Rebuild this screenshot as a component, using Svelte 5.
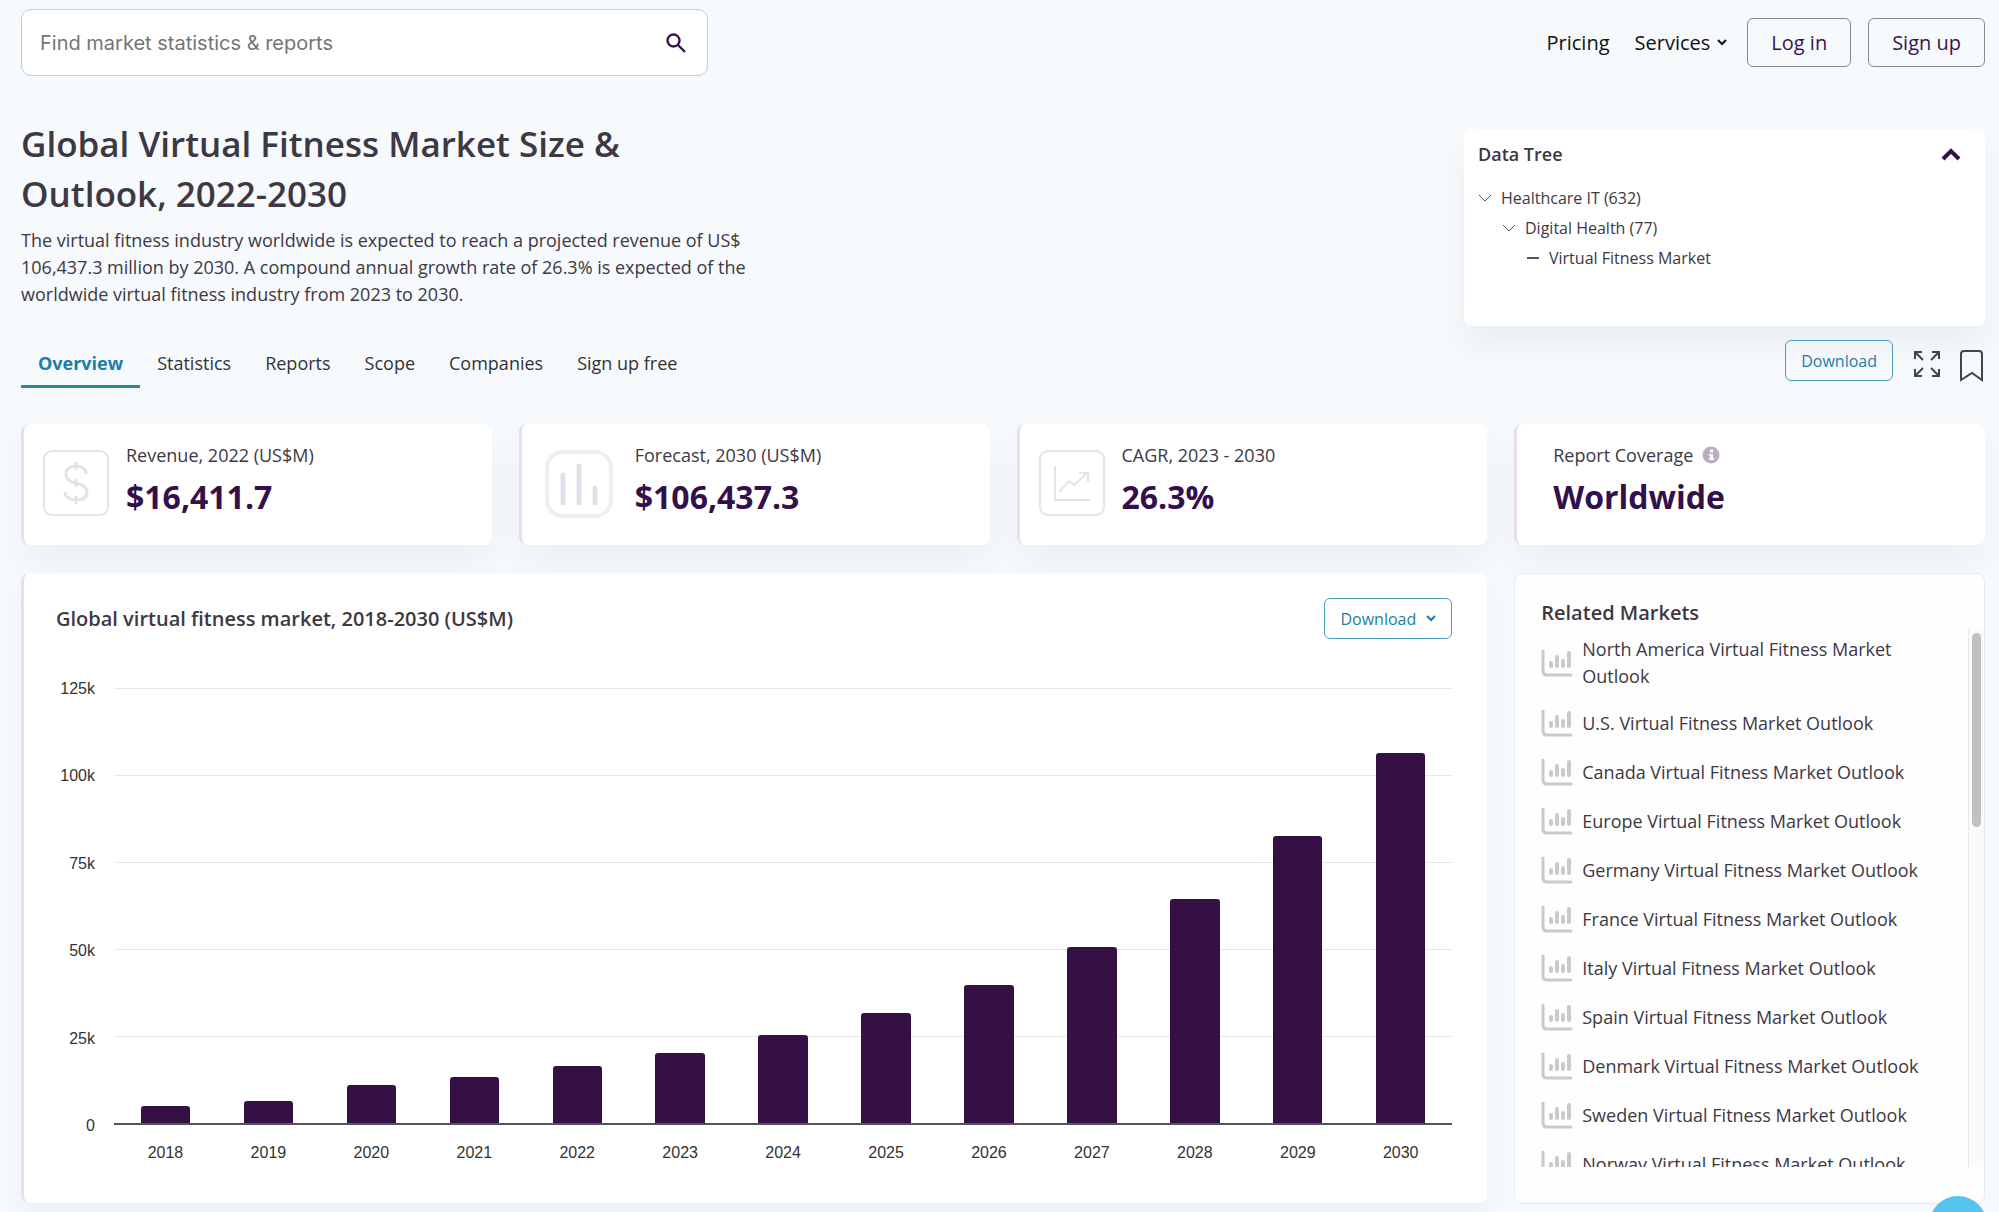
<script lang="ts">
	interface Row {
		year: number;
		value: number;
	}

	const MAX = 125000;

	const tabs = ['Overview', 'Statistics', 'Reports', 'Scope', 'Companies', 'Sign up free'];
	let active = 'Overview';

	const ticks = ['125k', '100k', '75k', '50k', '25k', '0'];

	const rows: Row[] = [
		{ year: 2018, value: 4900 },
		{ year: 2019, value: 6300 },
		{ year: 2020, value: 11000 },
		{ year: 2021, value: 13300 },
		{ year: 2022, value: 16411.7 },
		{ year: 2023, value: 20100 },
		{ year: 2024, value: 25200 },
		{ year: 2025, value: 31700 },
		{ year: 2026, value: 39700 },
		{ year: 2027, value: 50600 },
		{ year: 2028, value: 64300 },
		{ year: 2029, value: 82400 },
		{ year: 2030, value: 106437.3 }
	];

	const regions = [
		'North America',
		'U.S.',
		'Canada',
		'Europe',
		'Germany',
		'France',
		'Italy',
		'Spain',
		'Denmark',
		'Sweden',
		'Norway'
	];
</script>

<div class="page">
	<header>
		<form class="search" on:submit|preventDefault>
			<input type="search" aria-label="Search" placeholder="Find market statistics & reports" />
			<button type="submit" aria-label="Search">
				<svg width="22" height="22" viewBox="0 0 22 22" fill="none" stroke="#3a1150" stroke-width="2.4">
					<circle cx="8.5" cy="8.5" r="6" />
					<path d="M13 13l7 7" />
				</svg>
			</button>
		</form>
		<nav class="top">
			<a href="#pricing">Pricing</a>
			<a href="#services">
				Services
				<svg width="10" height="7" viewBox="0 0 10 7" fill="none" stroke="#111" stroke-width="2">
					<path d="M1 1l4 4 4-4" />
				</svg>
			</a>
			<button class="account">Log in</button>
			<button class="account">Sign up</button>
		</nav>
	</header>

	<section class="intro">
		<div class="lead">
			<h1>Global Virtual Fitness Market Size &amp; Outlook, 2022-2030</h1>
			<p>
				The virtual fitness industry worldwide is expected to reach a projected revenue of US$
				106,437.3 million by 2030. A compound annual growth rate of 26.3% is expected of the
				worldwide virtual fitness industry from 2023 to 2030.
			</p>
		</div>
		<aside class="tree">
			<div class="tree-head">
				<h2>Data Tree</h2>
				<button aria-label="Collapse data tree">
					<svg width="20" height="13" viewBox="0 0 20 13" fill="none" stroke="#33104a" stroke-width="4">
						<path d="M2 11l8-8 8 8" />
					</svg>
				</button>
			</div>
			<ul>
				<li>
					<svg width="14" height="8" viewBox="0 0 14 8"><path d="M1 1l6 6 6-6" /></svg>
					<a href="#healthcare">Healthcare IT (632)</a>
				</li>
				<li class="second">
					<svg width="14" height="8" viewBox="0 0 14 8"><path d="M1 1l6 6 6-6" /></svg>
					<a href="#digital">Digital Health (77)</a>
				</li>
				<li class="third">
					<svg width="14" height="8" viewBox="0 0 14 8"><path stroke-width="2" d="M1 4h12" /></svg>
					<a href="#fitness">Virtual Fitness Market</a>
				</li>
			</ul>
		</aside>
	</section>

	<div class="bar">
		<nav class="tabs">
			{#each tabs as tab}
				<button class:active={tab === active} on:click={() => (active = tab)}>{tab}</button>
			{/each}
		</nav>
		<div class="tools">
			<button class="download">Download</button>
			<button class="icon" aria-label="Full screen">
				<svg width="28" height="28" viewBox="0 0 28 28" fill="none" stroke="#444" stroke-width="2">
					<path d="M10 10L2 2M2 9V2h7M18 10l8-8M19 2h7v7M10 18l-8 8M2 19v7h7M18 18l8 8M26 19v7h-7" />
				</svg>
			</button>
			<button class="icon" aria-label="Bookmark">
				<svg width="26" height="32" viewBox="0 0 26 32" fill="none" stroke="#444" stroke-width="2">
					<path d="M2 30V4q0-3 3-3h15q3 0 3 3v26l-10-7z" />
				</svg>
			</button>
		</div>
	</div>

	<section class="stats">
		<article class="card">
			<svg class="badge" width="66" height="66" viewBox="0 0 66 66" fill="none" stroke="#e6e2ea" stroke-width="2">
				<rect x="1" y="1" width="64" height="64" rx="8" />
				<path
					stroke-width="3"
					d="M43 24c0-5-4-8-10-8s-10 3-10 8 4 8 10 9 11 3 11 9-5 8-11 8-11-3-11-8M33 12v8M33 29v8M33 46v8"
				/>
			</svg>
			<div>
				<h3>Revenue, 2022 (US$M)</h3>
				<strong>$16,411.7</strong>
			</div>
		</article>
		<article class="card forecast">
			<svg class="badge" width="68" height="68" viewBox="0 0 68 68" fill="none" stroke="#f0eef3" stroke-width="4">
				<rect x="2" y="2" width="64" height="64" rx="16" />
				<path stroke="#e3dfe9" stroke-width="5" stroke-linecap="round" d="M18 25v28M34 16v37M50 38v15" />
			</svg>
			<div>
				<h3>Forecast, 2030 (US$M)</h3>
				<strong>$106,437.3</strong>
			</div>
		</article>
		<article class="card">
			<svg class="badge" width="66" height="66" viewBox="0 0 66 66" fill="none" stroke="#e6e2ea" stroke-width="2">
				<rect x="1" y="1" width="64" height="64" rx="8" />
				<path d="M16 16v34h35M20 42l10-11 5 4 13-12M40 23h9v9" />
			</svg>
			<div>
				<h3>CAGR, 2023 - 2030</h3>
				<strong>26.3%</strong>
			</div>
		</article>
		<article class="card plain">
			<div>
				<h3>
					Report Coverage
					<svg width="18" height="18" viewBox="0 0 18 18">
						<circle cx="9" cy="9" r="8.5" fill="#b9aec3" />
						<path d="M8 3.5h3v3H8zM7 8h4v4h1v2H7v-2h1v-2H7z" fill="#fff" />
					</svg>
				</h3>
				<strong>Worldwide</strong>
			</div>
		</article>
	</section>

	<section class="panels">
		<article class="chart-card">
			<div class="chart-head">
				<h2>Global virtual fitness market, 2018-2030 (US$M)</h2>
				<button class="download">
					Download
					<svg width="10" height="7" viewBox="0 0 10 7" fill="none" stroke="#1b7ea6" stroke-width="2">
						<path d="M1 1l4 4 4-4" />
					</svg>
				</button>
			</div>
			<div class="chart">
				<div class="axis">
					{#each ticks as tick}
						<span>{tick}</span>
					{/each}
				</div>
				<div class="plot">
					{#each rows as row}
						<div class="col">
							<div class="bar-fill" style={`height: ${(row.value / MAX) * 100}%`}></div>
						</div>
					{/each}
				</div>
				<div class="years">
					{#each rows as row}
						<span>{row.year}</span>
					{/each}
				</div>
			</div>
		</article>

		<aside class="related">
			<h2>Related Markets</h2>
			<div class="scroller">
				<ul>
					{#each regions as region}
						<li>
							<svg width="32" height="28" viewBox="0 0 32 28" fill="none" stroke="#cacaca" stroke-linecap="round">
								<path stroke-width="3" d="M2 2v20q0 4 4 4h24" />
								<path stroke-width="4" d="M10 14v3M16 8v9M22 12v5M28 4v13" />
							</svg>
							<a href={`#${region}`}>{region} Virtual Fitness Market Outlook</a>
						</li>
					{/each}
				</ul>
				<div class="track"><div class="thumb"></div></div>
			</div>
		</aside>
	</section>

	<button class="chat" aria-label="Open chat"></button>
</div>

<style>
	:global(body) {
		margin: 0;
		background: #f6fafd;
	}

	.page {
		box-sizing: border-box;
		padding: 9px 14px 9px 21px;
		font-family: 'Open Sans', 'Noto Sans', sans-serif;
		color: #3d3843;
		overflow: hidden;
	}

	.page :global(*) {
		box-sizing: border-box;
	}

	h1,
	h2,
	h3,
	p,
	ul {
		margin: 0;
		padding: 0;
	}

	li {
		list-style: none;
	}

	a {
		color: inherit;
		text-decoration: none;
	}

	button {
		font: inherit;
		background: none;
		border: 0;
		padding: 0;
		cursor: pointer;
	}

	svg {
		display: block;
		flex: none;
	}

	header {
		display: flex;
		justify-content: space-between;
		align-items: center;
	}

	.search {
		display: flex;
		align-items: center;
		width: 35%;
		height: 67px;
		padding: 0 20px 0 18px;
		background: #fff;
		border: 1px solid #c9cbd3;
		border-radius: 10px;
	}

	.search input {
		flex: 1;
		border: 0;
		outline: 0;
		padding: 0;
		background: none;
		font: 20px Inter, sans-serif;
	}

	.search input::placeholder {
		color: #757575;
	}

	.top {
		display: flex;
		align-items: center;
		font-size: 20px;
		color: #111;
	}

	.top a {
		display: flex;
		align-items: center;
		gap: 7px;
		margin-right: 25px;
	}

	.top a + a {
		margin-right: 20px;
	}

	.account {
		height: 49px;
		padding: 0 23px;
		border: 1px solid #8a8592;
		border-radius: 6px;
		color: #3a1150;
	}

	.account + .account {
		margin-left: 17px;
	}

	.intro {
		display: flex;
		justify-content: space-between;
		margin-top: 43px;
	}

	.lead {
		width: 730px;
	}

	h1 {
		margin-right: 60px;
		font-size: 35px;
		line-height: 50px;
		font-weight: 600;
	}

	.lead p {
		margin-top: 8px;
		font-size: 18px;
		line-height: 27px;
	}

	.tree {
		align-self: flex-start;
		width: 521px;
		height: 197px;
		margin-top: 10px;
		padding: 12px 24px 0 14px;
		background: #fff;
		border-radius: 8px;
		box-shadow: 0 20px 30px rgba(60, 60, 80, 0.06);
	}

	.tree-head {
		display: flex;
		align-items: center;
		justify-content: space-between;
	}

	.tree h2 {
		font-size: 18px;
		line-height: 27px;
		font-weight: 600;
	}

	.tree ul {
		margin-top: 15px;
	}

	.tree li {
		display: flex;
		align-items: center;
		gap: 9px;
		font-size: 16px;
		line-height: 30px;
	}

	.tree li svg {
		fill: none;
		stroke: #555;
	}

	.tree .second {
		padding-left: 24px;
	}

	.tree .third {
		padding-left: 48px;
	}

	.bar {
		display: flex;
		justify-content: space-between;
		margin-top: 14px;
	}

	.tabs {
		display: flex;
		align-items: flex-end;
	}

	.tabs button {
		height: 48px;
		padding: 0 17px;
		border-bottom: 3px solid transparent;
		font-size: 18px;
		color: #333;
	}

	.tabs .active {
		border-color: #2a85ad;
		color: #1b7ea6;
		font-weight: 700;
	}

	.tools {
		display: flex;
		align-items: flex-start;
	}

	.download {
		display: flex;
		align-items: center;
		gap: 10px;
		height: 41px;
		padding: 0 15px;
		border: 1px solid #4a9fbe;
		border-radius: 6px;
		font-size: 16px;
		color: #1b7ea6;
	}

	.icon {
		margin: 10px 0 0 20px;
	}

	.icon + .icon {
		margin-left: 18px;
	}

	.stats {
		display: grid;
		grid-template-columns: repeat(4, 1fr);
		gap: 27px;
		margin-top: 36px;
	}

	.card,
	.chart-card {
		background: #fff;
		border-left: 3px solid #e6e0ee;
		border-radius: 8px;
		box-shadow: 0 16px 30px rgba(60, 60, 110, 0.05);
	}

	.card {
		display: flex;
		gap: 17px;
		height: 121px;
		padding: 17px 19px;
	}

	.badge {
		margin-top: 9px;
	}

	.forecast {
		gap: 22px;
		padding-left: 23px;
	}

	.plain {
		padding-left: 36px;
	}

	h3 {
		display: flex;
		align-items: center;
		gap: 9px;
		font-size: 18px;
		line-height: 28px;
		font-weight: 400;
	}

	.card strong {
		display: block;
		font-size: 32px;
		line-height: 56px;
		font-weight: 700;
		color: #33104a;
	}

	.panels {
		display: grid;
		grid-template-columns: repeat(4, 1fr);
		gap: 27px;
		margin-top: 28px;
	}

	.chart-card {
		grid-column: span 3;
		height: 630px;
		padding: 25px 35px 0 32px;
	}

	.chart-head {
		display: flex;
		justify-content: space-between;
	}

	.chart-head h2,
	.related h2 {
		font-size: 20px;
		line-height: 28px;
		font-weight: 600;
	}

	.chart-head h2 {
		margin-top: 7px;
	}

	.chart {
		display: grid;
		grid-template-columns: 39px 1fr;
		column-gap: 19px;
		margin-top: 49px;
		font: 16px 'Liberation Sans', sans-serif;
		color: #333;
	}

	.axis {
		display: flex;
		flex-direction: column;
		justify-content: space-between;
		height: 455px;
		margin-top: -8px;
		text-align: right;
		line-height: 18px;
	}

	.plot {
		display: flex;
		height: 437px;
		border-bottom: 2px solid #555;
		background: repeating-linear-gradient(#e8e8ea 0 1px, transparent 1px 87px);
	}

	.col {
		flex: 1;
		display: flex;
		align-items: flex-end;
		justify-content: center;
	}

	.bar-fill {
		width: 48%;
		background: #351047;
		border-radius: 3px 3px 0 0;
	}

	.years {
		grid-column: 2;
		display: flex;
		margin-top: 9px;
	}

	.years span {
		flex: 1;
		text-align: center;
	}

	.related {
		height: 631px;
		padding: 25px 0 0 26px;
		background: #fefefe;
		border: 1px solid #e6ebef;
		border-radius: 8px;
	}

	.scroller {
		display: flex;
		height: 538px;
		margin-top: 2px;
		overflow: hidden;
	}

	.scroller ul {
		flex: 1;
		padding-top: 7px;
	}

	.related li {
		display: flex;
		align-items: center;
		gap: 9px;
		min-height: 32px;
		margin: 0 30px 17px 0;
		font-size: 18px;
		line-height: 27px;
	}

	.track {
		width: 16px;
		padding: 4px 3px;
		background: #fafafa;
		border-left: 1px solid #e8e8e8;
	}

	.thumb {
		height: 194px;
		border-radius: 5px;
		background: #c1c1c1;
	}

	/* floating chat bubble, mostly below the fold */
	.chat {
		position: fixed;
		right: 12px;
		bottom: -42px;
		width: 58px;
		height: 58px;
		border-radius: 50%;
		background: #55c5ef;
	}
</style>
